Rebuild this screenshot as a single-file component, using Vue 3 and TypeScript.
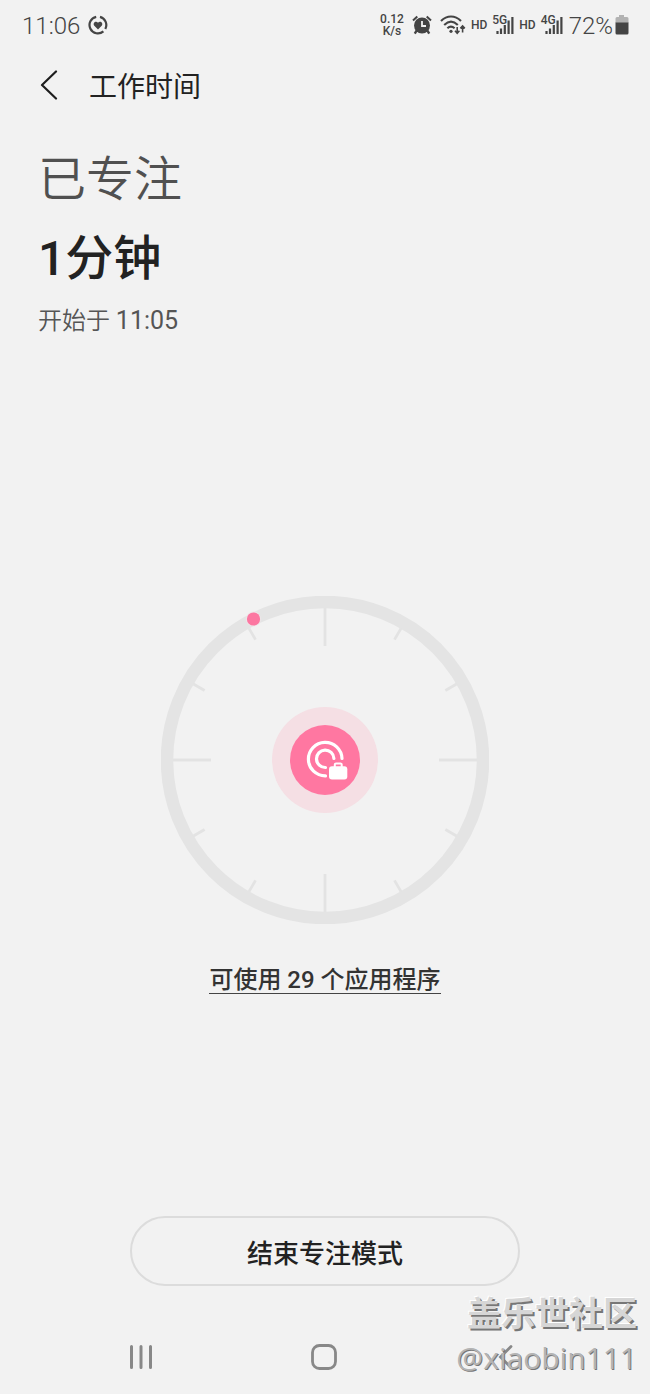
<script setup lang="ts">
interface Tick {
  angle: number
  inner: number
}

interface Network {
  name: string
}

const networks: Network[] = [{ name: '5G' }, { name: '4G' }]

const ticks: Tick[] = Array.from({ length: 12 }, (_, i) => ({
  angle: i * 30,
  inner: i % 3 === 0 ? 114 : 139,
}))
</script>

<template>
  <div class="screen">
    <header class="status">
      <div class="status-group">
        <span class="clock">11:06</span>
        <svg class="focus-mark" width="20" height="20" viewBox="0 0 20 20" aria-hidden="true">
          <g fill="none" stroke="#444" stroke-width="2.2">
            <path d="M8.2 1.8A8.4 8.4 0 1 0 15.4 16.4" />
            <path d="M12 1.9A8.4 8.4 0 0 1 17.3 14" />
          </g>
          <path d="M10 14.4 6.3 10.7C4.2 8.2 7.8 5.2 10 7.7c2.2-2.5 5.8.5 3.7 3z" fill="#444" />
        </svg>
      </div>
      <div class="status-group status-right">
        <span class="speed"><span>0.12</span><span>K/s</span></span>
        <svg class="alarm" width="20" height="20" viewBox="0 0 20 20" aria-hidden="true">
          <path d="M1 5.6 5.3 1.6M19 5.6 14.7 1.6" fill="none" stroke="#444" stroke-width="2" />
          <circle cx="10" cy="10.5" r="8" fill="#444" />
          <path d="M4.6 15.5 2.8 18.6M15.4 15.5 17.2 18.6" stroke="#444" stroke-width="2.4" />
          <path d="M10 6v5h4" fill="none" stroke="#f2f2f2" stroke-width="1.8" />
        </svg>
        <svg class="wifi" width="26" height="22" viewBox="0 0 26 22" aria-hidden="true">
          <g fill="none" stroke="#444" stroke-width="2.1">
            <path d="M1 7C7 1 15 1 21 7" />
            <path d="M4.2 10.9C8.5 6.7 13.5 6.7 17.8 10.9" />
            <path d="M7.4 14.3C9.6 12.1 12.2 12.1 14.6 14.3" />
            <path d="M17.2 13V19M15 16.8 17.2 19.2 19.4 16.8M22.6 18.5V12M20.4 14.4 22.6 12 24.8 14.4" stroke-width="1.6" />
          </g>
          <circle cx="11" cy="17.3" r="1.6" fill="#444" />
        </svg>
        <span v-for="network in networks" :key="network.name" class="network">
          <span class="hd">HD</span>
          <span class="signal">
            <svg width="22" height="20" viewBox="0 0 22 20" aria-hidden="true">
              <path d="M5.5 19v-3M9 19v-5.5M12.8 19V10M16.6 19V5.5M20.4 19V2" fill="none" stroke="#444" stroke-width="2.2" />
            </svg>
            <span class="generation">{{ network.name }}</span>
          </span>
        </span>
        <span class="percent">72%</span>
        <svg class="battery" width="14" height="20" viewBox="0 0 14 20" aria-hidden="true">
          <path d="M4 0h5v2h3q1.500 0 1.500 1.500V8H.5V3.500Q.5 2 2 2h2z" fill="#b2b2b2" />
          <path d="M.5 7.500h13V18q0 1.500-1.500 1.500H2Q.5 19.500.5 18z" fill="#444" />
        </svg>
      </div>
    </header>

    <nav class="titlebar">
      <button class="back" type="button" aria-label="返回">
        <svg width="18" height="30" viewBox="0 0 18 30" aria-hidden="true">
          <path d="M16 1.5 2 15l14 13.5" fill="none" stroke="#1e1e1e" stroke-width="2.2" stroke-linecap="round" stroke-linejoin="round" />
        </svg>
      </button>
      <h1>工作时间</h1>
    </nav>

    <section class="intro">
      <p class="state">已专注</p>
      <p class="elapsed">1分钟</p>
      <p class="started">开始于 <time>11:05</time></p>
    </section>

    <main class="focus">
      <svg class="dial" viewBox="-164 -164 328 328" role="img" aria-label="1分钟">
        <circle r="158" fill="none" stroke="#e4e4e4" stroke-width="12.5" />
        <line
          v-for="tick in ticks"
          :key="tick.angle"
          x1="0"
          x2="0"
          y1="-152"
          :y2="-tick.inner"
          :transform="`rotate(${tick.angle})`"
          stroke="#e3e3e3"
          stroke-width="2.8"
        />
        <circle cx="-71.5" cy="-141" r="7.5" fill="#efe6e9" />
        <circle cx="-71.5" cy="-141" r="6.6" fill="#fc77a1" />
        <circle r="53" fill="#f5dfe4" />
        <circle r="35" fill="#ff77a1" />
        <g fill="none" stroke="#fff" stroke-width="3.2" stroke-linecap="round">
          <path d="M.5 15.9A16.8 16.8 0 1 1 17 -1.5" />
          <path d="M.5 7.5A8.7 8.7 0 1 1 8.9 -1.5" />
        </g>
        <rect x="3" y="4.8" width="20" height="15.5" rx="4" fill="#ff77a1" />
        <path d="M9.8 7V4.5Q9.8 3.5 11 3.5h4.5Q16.7 3.5 16.7 4.5V7" fill="#ff77a1" stroke="#fff" stroke-width="2" />
        <rect x="4" y="6.2" width="18.3" height="13.3" rx="3" fill="#fff" />
      </svg>
      <a class="apps" href="#">可使用 29 个应用程序</a>
    </main>

    <button class="finish" type="button">结束专注模式</button>

    <nav class="keys">
      <button type="button" aria-label="最近">
        <svg width="28" height="28" viewBox="0 0 28 28" aria-hidden="true">
          <path d="M4.5 3.5v21M14 3.5v21M23.5 3.5v21" stroke="#888" stroke-width="3" stroke-linecap="round" />
        </svg>
      </button>
      <button type="button" aria-label="主页">
        <svg width="28" height="28" viewBox="0 0 28 28" aria-hidden="true">
          <rect x="2.5" y="2.5" width="23" height="23" rx="7" fill="none" stroke="#888" stroke-width="2.8" />
        </svg>
      </button>
      <button type="button" aria-label="返回">
        <svg width="28" height="28" viewBox="0 0 28 28" aria-hidden="true">
          <path d="M19 3.5 8.5 14 19 24.5" fill="none" stroke="#888" stroke-width="2.8" stroke-linecap="round" />
        </svg>
      </button>
    </nav>

    <aside class="stamp">
      <span class="community">盖乐世社区</span>
      <span class="author">@xiaobin111</span>
    </aside>
  </div>
</template>

<style>
body {
  margin: 0;
  background: #f2f2f2;
}
</style>

<style scoped>
.screen {
  position: relative;
  display: flex;
  flex-direction: column;
  box-sizing: border-box;
  min-height: 100vh;
  background: #f2f2f2;
  color: #222;
  font-family: Roboto, "Noto Sans CJK SC", sans-serif;
}

button {
  margin: 0;
  padding: 0;
  border: 0;
  background: none;
  color: inherit;
  font: inherit;
  cursor: pointer;
}

svg {
  display: block;
  flex: none;
}

h1,
p {
  margin: 0;
  font-weight: 400;
}

.status {
  display: flex;
  align-items: center;
  justify-content: space-between;
  height: 50px;
  padding: 0 21px 0 22px;
  color: #444;
}

.status-group {
  display: flex;
  align-items: center;
}

.clock,
.percent {
  padding-top: 2px;
  font-size: 24px;
  line-height: 28px;
  font-weight: 350;
}

.focus-mark {
  margin-left: 8px;
}

.speed {
  display: flex;
  flex-direction: column;
  align-items: center;
  font-size: 12px;
  line-height: 12px;
  font-weight: 500;
}

.alarm {
  margin-left: 8px;
}

.wifi {
  margin-left: 8px;
}

.network {
  display: flex;
  align-items: center;
  gap: 5px;
  margin-left: 5px;
}

.hd {
  font-size: 12px;
  line-height: 16px;
  font-weight: 500;
}

.signal {
  position: relative;
}

.generation {
  position: absolute;
  top: 0;
  left: 0;
  font-size: 12px;
  line-height: 10px;
  font-weight: 500;
}

.percent {
  margin-left: 6px;
}

.battery {
  margin-left: 2px;
}

.titlebar {
  display: flex;
  align-items: center;
  gap: 31px;
  height: 70px;
  padding: 0 40px;
}

.titlebar h1 {
  padding-top: 5px;
  font-size: 28px;
  line-height: 40px;
}

.intro {
  padding: 24px 38px 0;
}

.state {
  color: #505050;
  font-size: 48px;
  line-height: 72px;
  font-weight: 350;
}

.elapsed {
  font-size: 48px;
  line-height: 86px;
  font-weight: 500;
}

.started {
  color: #555;
  font-size: 24px;
  line-height: 38px;
  font-weight: 350;
}

.started time {
  font-size: 25px;
  font-weight: 400;
}

.focus {
  flex: 1;
  display: flex;
  flex-direction: column;
  align-items: center;
  justify-content: center;
  gap: 43px;
  padding-top: 33px;
}

.dial {
  width: 328px;
  max-width: 80%;
}

.apps {
  color: #333;
  font-size: 24px;
  line-height: 26px;
  font-weight: 500;
  text-decoration: none;
  border-bottom: 1px solid #444;
}

.finish {
  align-self: center;
  box-sizing: border-box;
  width: 60%;
  height: 70px;
  border: 2px solid #dcdcdc;
  border-radius: 35px;
  font-size: 26px;
  font-weight: 500;
}

.keys {
  display: flex;
  justify-content: space-between;
  margin-top: 56px;
  padding: 0 130px 22px 127px;
}

.keys button {
  padding: 1px 0;
}

.stamp {
  position: absolute;
  right: 13px;
  bottom: 14px;
  display: flex;
  flex-direction: column;
  align-items: flex-end;
  color: #d6d6d6;
  text-shadow: 2px 2px 0 #777, -1px -1px 0 #fff;
  pointer-events: none;
}

.community {
  font-size: 34px;
  line-height: 44px;
  font-weight: 700;
}

.author {
  color: #b4b4b4;
  font-family: "Open Sans", "Noto Sans", sans-serif;
  font-size: 30px;
  line-height: 44px;
  font-weight: 400;
  text-shadow: 1px 1px 0 #777;
}
</style>
